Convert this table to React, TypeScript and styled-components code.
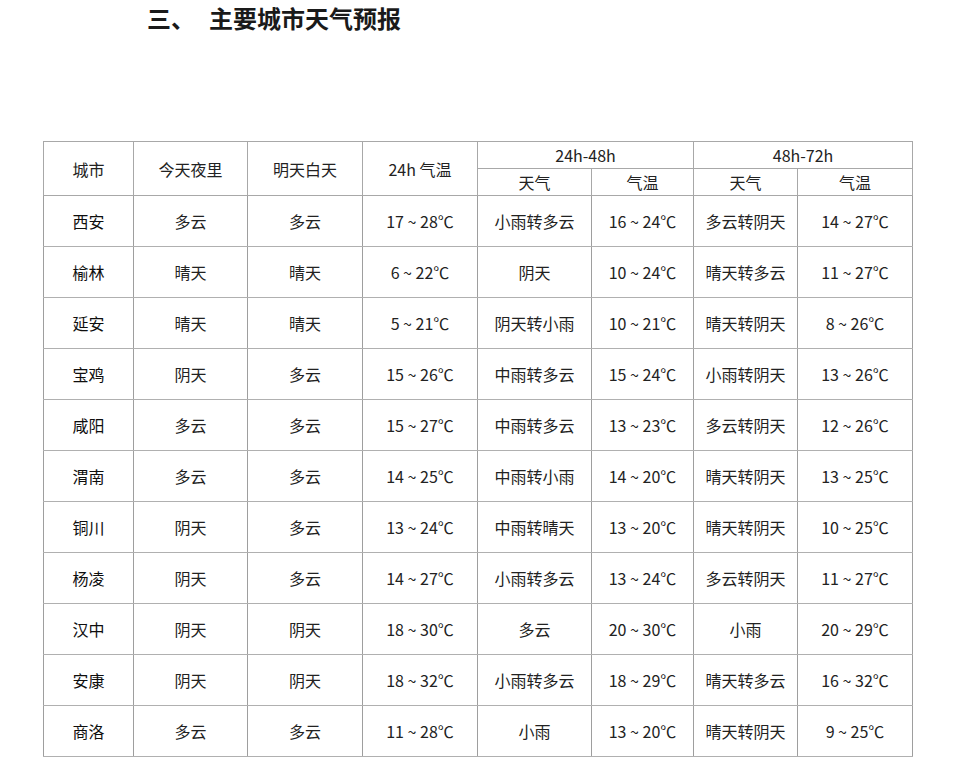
import React from "react";
import styled, { createGlobalStyle } from "styled-components";

const Global = createGlobalStyle`
  html, body { margin: 0; padding: 0; background: #fff; }
  body { font-family: "Noto Sans CJK SC", "Noto Sans", sans-serif; color: #222; }
`;

const Page = styled.div`
  width: 960px;
  height: 762px;
  overflow: hidden;
  background: #fff;
  display: flex;
  flex-direction: column;
`;

const Title = styled.h2`
  margin: 0;
  padding: 0 0 0 147px;
  height: 36px;
  font-size: 24px;
  line-height: 36px;
  font-weight: 700;
  color: #1a1a1a;
  display: flex;
  gap: 14px;
`;

const Table = styled.table`
  margin: 105px 0 0 43px;
  border-collapse: collapse;
  table-layout: fixed;
  width: 869px;
  font-size: 16px;
  color: #222;
  border-left: 1px solid #c4c4c4;
`;

type Line = "dark" | "mid" | "light";
const lineColor = (l: Line) => (l === "dark" ? "#3a3a3a" : l === "mid" ? "#8a8a8a" : "#b8b8b8");

const HeadCell = styled.th<{ $dark?: boolean }>`
  font-weight: 400;
  text-align: center;
  vertical-align: middle;
  padding: 0;
  height: 26px;
  line-height: 26px;
  border: 1px solid #a8a8a8;
  border-left-color: ${(p) => (p.$dark ? "#333" : "#a8a8a8")};
`;

const Row = styled.tr<{ $line: Line }>`
  height: 51px;
  & > td { border-top: 1px solid ${(p) => lineColor(p.$line)}; }
`;

const Cell = styled.td<{ $dark?: boolean; $city?: boolean }>`
  text-align: center;
  vertical-align: middle;
  padding: 0;
  border-left: 1px solid ${(p) => (p.$dark ? "#333" : "#9e9e9e")};
  border-right: 1px solid #9e9e9e;
  border-bottom: 1px solid #b0b0b0;
  font-weight: 400;
  color: ${(p) => (p.$city ? "#0e0e0e" : "#222")};
  white-space: nowrap;
`;

const rows: [string, string, string, string, string, string, string, string][] = [
  ["西安", "多云", "多云", "17 ~ 28℃", "小雨转多云", "16 ~ 24℃", "多云转阴天", "14 ~ 27℃"],
  ["榆林", "晴天", "晴天", "6 ~ 22℃", "阴天", "10 ~ 24℃", "晴天转多云", "11 ~ 27℃"],
  ["延安", "晴天", "晴天", "5 ~ 21℃", "阴天转小雨", "10 ~ 21℃", "晴天转阴天", "8 ~ 26℃"],
  ["宝鸡", "阴天", "多云", "15 ~ 26℃", "中雨转多云", "15 ~ 24℃", "小雨转阴天", "13 ~ 26℃"],
  ["咸阳", "多云", "多云", "15 ~ 27℃", "中雨转多云", "13 ~ 23℃", "多云转阴天", "12 ~ 26℃"],
  ["渭南", "多云", "多云", "14 ~ 25℃", "中雨转小雨", "14 ~ 20℃", "晴天转阴天", "13 ~ 25℃"],
  ["铜川", "阴天", "多云", "13 ~ 24℃", "中雨转晴天", "13 ~ 20℃", "晴天转阴天", "10 ~ 25℃"],
  ["杨凌", "阴天", "多云", "14 ~ 27℃", "小雨转多云", "13 ~ 24℃", "多云转阴天", "11 ~ 27℃"],
  ["汉中", "阴天", "阴天", "18 ~ 30℃", "多云", "20 ~ 30℃", "小雨", "20 ~ 29℃"],
  ["安康", "阴天", "阴天", "18 ~ 32℃", "小雨转多云", "18 ~ 29℃", "晴天转多云", "16 ~ 32℃"],
  ["商洛", "多云", "多云", "11 ~ 28℃", "小雨", "13 ~ 20℃", "晴天转阴天", "9 ~ 25℃"],
];

const topLines: Line[] = ["light", "dark", "light", "dark", "light", "dark", "mid", "mid", "mid", "mid", "mid"];
const widths = [90, 114, 115, 115, 114, 102, 104, 115];

export default function App() {
  return (
    <Page>
      <Global />
      <Title>
        <span>三、</span>
        <span>主要城市天气预报</span>
      </Title>
      <Table>
        <colgroup>
          {widths.map((w, i) => (
            <col key={i} style={{ width: w }} />
          ))}
        </colgroup>
        <thead>
          <tr>
            <HeadCell rowSpan={2}>城市</HeadCell>
            <HeadCell rowSpan={2}>今天夜里</HeadCell>
            <HeadCell rowSpan={2}>明天白天</HeadCell>
            <HeadCell rowSpan={2}>24h 气温</HeadCell>
            <HeadCell colSpan={2}>24h-48h</HeadCell>
            <HeadCell colSpan={2}>48h-72h</HeadCell>
          </tr>
          <tr>
            <HeadCell>天气</HeadCell>
            <HeadCell $dark>气温</HeadCell>
            <HeadCell>天气</HeadCell>
            <HeadCell>气温</HeadCell>
          </tr>
        </thead>
        <tbody>
          {rows.map((r, i) => (
            <Row key={r[0]} $line={topLines[i]}>
              {r.map((c, j) => (
                <Cell key={j} $city={j === 0} $dark={j === 5}>
                  {c}
                </Cell>
              ))}
            </Row>
          ))}
        </tbody>
      </Table>
    </Page>
  );
}
